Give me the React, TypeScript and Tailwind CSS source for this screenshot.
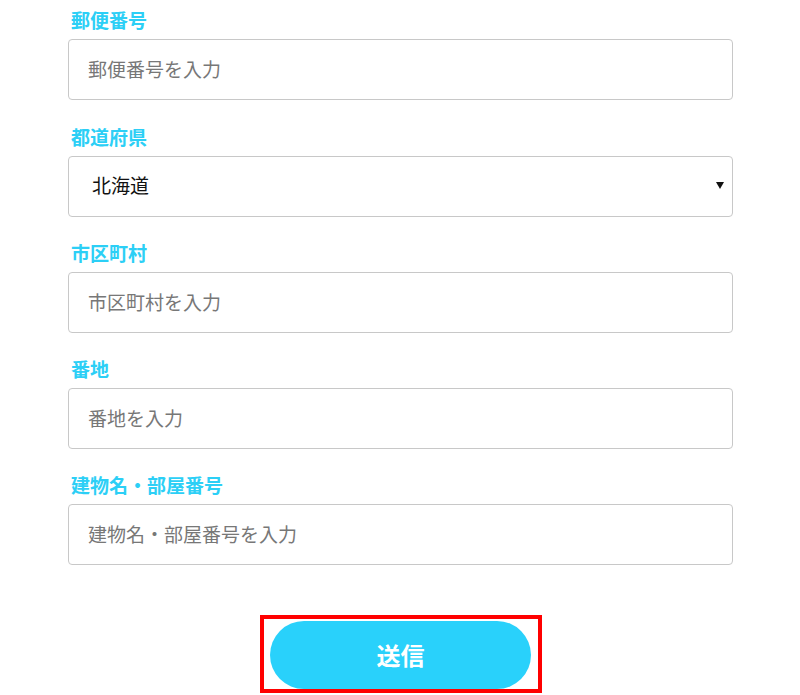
import React from "react";

const font = { fontFamily: '"Noto Sans CJK JP", "Noto Sans", sans-serif' };

function Field({ label, placeholder, mb = "mb-[22px]" }: { label: string; placeholder: string; mb?: string }) {
  return (
    <div className={mb}>
      <div className="h-[28px] mb-[5px] text-[19px] leading-[28px] font-bold text-[#2ccff6] pl-[3px]">{label}</div>
      <input
        className="w-full h-[61px] border border-[#c8c8c8] rounded-[4px] pl-[19px] pb-[2px] text-[19px] text-[#333] placeholder:text-[#777] outline-none bg-white"
        placeholder={placeholder}
      />
    </div>
  );
}

export default function App() {
  return (
    <div className="w-[800px] h-[695px] bg-white overflow-hidden" style={font}>
      <div className="w-[665px] ml-[68px] pt-[6px]">
        <Field label="郵便番号" placeholder="郵便番号を入力" mb="mb-[23px]" />
        <div className="mb-[22px]">
          <div className="h-[28px] mb-[5px] text-[19px] leading-[28px] font-bold text-[#2ccff6] pl-[3px]">都道府県</div>
          <div className="relative">
            <select
              defaultValue="北海道"
              className="w-full h-[61px] border border-[#c8c8c8] rounded-[4px] pl-[23px] pb-[2px] text-[19px] text-[#111] appearance-none bg-white outline-none"
              style={font}
            >
              <option>北海道</option>
              <option>青森県</option>
              <option>岩手県</option>
            </select>
            <span className="absolute right-[9px] top-[26px] w-0 h-0 border-l-[4px] border-r-[4px] border-t-[7px] border-l-transparent border-r-transparent border-t-[#111] pointer-events-none" />
          </div>
        </div>
        <Field label="市区町村" placeholder="市区町村を入力" />
        <Field label="番地" placeholder="番地を入力" />
        <Field label="建物名・部屋番号" placeholder="建物名・部屋番号を入力" />
        <div className="flex justify-center pt-[28px]">
          <div className="border-4 border-[#ff0000] pl-[6px] pr-[7px] pt-[2px] ml-[1px]">
            <button className="w-[261px] h-[68px] rounded-full bg-[#29d1fb] text-white text-[24px] font-bold flex items-center justify-center">
              送信
            </button>
          </div>
        </div>
      </div>
    </div>
  );
}
